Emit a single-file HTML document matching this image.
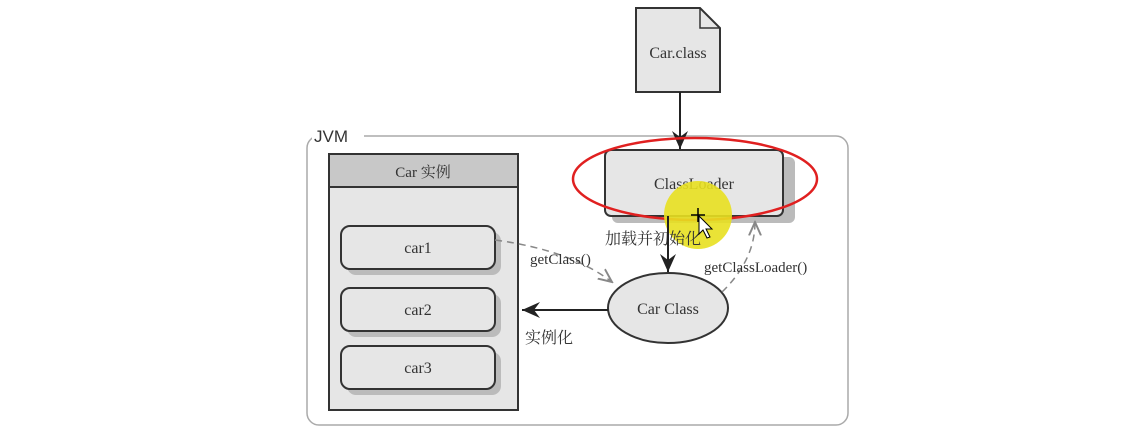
<!DOCTYPE html>
<html><head><meta charset="utf-8"><style>
body{margin:0;width:1148px;height:441px;background:#fff;overflow:hidden}
svg text{font-family:"Liberation Serif","Noto Serif CJK SC",serif;fill:#333}
</style></head><body>
<svg width="1148" height="441" xmlns="http://www.w3.org/2000/svg">
<defs><marker id="a" markerWidth="10" markerHeight="10" refX="9" refY="5" orient="auto"><path d="M0,1 L9,5 L0,9 L3,5z" fill="#222"/></marker>
<marker id="g" markerWidth="10" markerHeight="10" refX="9" refY="5" orient="auto"><path d="M0,1 L9,5 L0,9" fill="none" stroke="#888" stroke-width="1.3"/></marker></defs>
<path d="M636,8 H700 L720,28 V92 H636Z" fill="#e6e6e6" stroke="#333" stroke-width="2"/>
<path d="M700,8 V28 H720" fill="none" stroke="#333" stroke-width="1.5"/>
<text x="678" y="58" font-size="16" text-anchor="middle">Car.class</text>
<rect x="307" y="136" width="541" height="289" rx="12" fill="#fff" stroke="#aaa" stroke-width="1.5"/>
<line x1="680" y1="92" x2="680" y2="149" stroke="#222" stroke-width="2" marker-end="url(#a)"/>
<rect x="312" y="126" width="52" height="18" fill="#fff"/>
<text x="314" y="142" font-size="17" style="font-family:'Liberation Sans',sans-serif">JVM</text>
<rect x="329" y="154" width="189" height="256" fill="#e6e6e6" stroke="#333" stroke-width="2"/>
<rect x="329" y="154" width="189" height="33" fill="#c8c8c8" stroke="#333" stroke-width="2"/>
<text x="423" y="177" font-size="15" text-anchor="middle">Car 实例</text>
<rect x="347" y="232" width="154" height="43" rx="9" fill="#bbb"/>
<rect x="341" y="226" width="154" height="43" rx="9" fill="#e6e6e6" stroke="#333" stroke-width="2"/>
<text x="418" y="253" font-size="16" text-anchor="middle">car1</text>
<rect x="347" y="294" width="154" height="43" rx="9" fill="#bbb"/>
<rect x="341" y="288" width="154" height="43" rx="9" fill="#e6e6e6" stroke="#333" stroke-width="2"/>
<text x="418" y="315" font-size="16" text-anchor="middle">car2</text>
<rect x="347" y="352" width="154" height="43" rx="9" fill="#bbb"/>
<rect x="341" y="346" width="154" height="43" rx="9" fill="#e6e6e6" stroke="#333" stroke-width="2"/>
<text x="418" y="373" font-size="16" text-anchor="middle">car3</text>
<rect x="612" y="157" width="183" height="66" rx="6" fill="#bbb"/>
<rect x="605" y="150" width="178" height="66" rx="6" fill="#e6e6e6" stroke="#333" stroke-width="2"/>
<text x="694" y="189" font-size="16" text-anchor="middle">ClassLoader</text>
<ellipse cx="695" cy="179" rx="122" ry="41" fill="none" stroke="#e02020" stroke-width="2.5"/>
<circle cx="698" cy="215" r="34" fill="#e8e020" opacity="0.9"/>
<text x="605" y="244" font-size="16" fill="#444">加载并初始化</text>
<line x1="668" y1="216" x2="668" y2="272" stroke="#222" stroke-width="2" marker-end="url(#a)"/>
<path d="M698,208 v14 M691,215 h14" stroke="#000" stroke-width="1.5"/>
<path d="M699,216 l0,18 l4,-4 l4,8 l3,-1 l-4,-8 l6,0z" fill="#fff" stroke="#000" stroke-width="1"/>
<ellipse cx="668" cy="308" rx="60" ry="35" fill="#e6e6e6" stroke="#333" stroke-width="2"/>
<text x="668" y="314" font-size="16" text-anchor="middle">Car Class</text>
<line x1="608" y1="310" x2="522" y2="310" stroke="#222" stroke-width="2" marker-end="url(#a)"/>
<text x="525" y="343" font-size="16" fill="#444">实例化</text>
<path d="M495,240 Q570,250 612,282" fill="none" stroke="#888" stroke-width="1.5" stroke-dasharray="7,5" marker-end="url(#g)"/>
<text x="530" y="264" font-size="15">getClass()</text>
<path d="M722,292 Q755,260 755,222" fill="none" stroke="#888" stroke-width="1.5" stroke-dasharray="7,5" marker-end="url(#g)"/>
<text x="704" y="272" font-size="15">getClassLoader()</text>
</svg>
</body></html>
